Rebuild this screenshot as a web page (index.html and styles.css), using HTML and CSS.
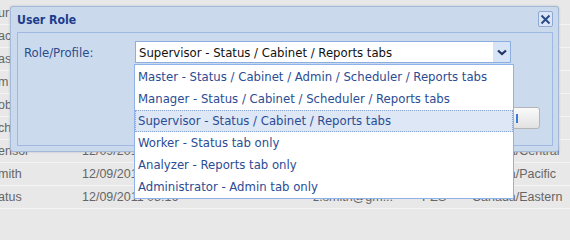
FILE: index.html
```html
<!DOCTYPE html>
<html>
<head>
<meta charset="utf-8">
<link rel="stylesheet" href="styles.css">
</head>
<body>
<div class="grid">
  <div class="row"><span class="c1">ur</span><span></span><span></span><span></span><span></span></div>
  <div class="row"><span class="c1">acl</span><span></span><span></span><span></span><span></span></div>
  <div class="row"><span class="c1">as</span><span></span><span></span><span></span><span></span></div>
  <div class="row"><span class="c1">m</span><span></span><span></span><span></span><span></span></div>
  <div class="row"><span class="c1">ob</span><span></span><span></span><span></span><span></span></div>
  <div class="row"><span class="c1">ch</span><span></span><span></span><span></span><span></span></div>
  <div class="row"><span class="c1">ensor</span><span>12/09/2011 08:16</span><span>z.smith@gmail.com</span><span>PZS</span><span>Canada/Central</span></div>
  <div class="row"><span class="c1">mith</span><span>12/09/2011 08:16</span><span>z.smith@gmail.com</span><span>PZS</span><span>Canada/Pacific</span></div>
  <div class="row"><span class="c1">atus</span><span>12/09/2011 08:16</span><span>z.smith@gm...</span><span>PZS</span><span>Canada/Eastern</span></div>
</div>

<div class="dialog">
  <div class="titlebar">
    <span class="title">User Role</span>
    <span class="close"><svg width="11" height="11" viewBox="0 0 11 11"><path d="M1.5 1.5 L9.5 9.5 M9.5 1.5 L1.5 9.5" stroke="#2c4a86" stroke-width="2" fill="none"/></svg></span>
  </div>
  <div class="panel">
    <div class="field">
      <span class="label">Role/Profile:</span>
      <div class="select">
        <span class="value">Supervisor - Status / Cabinet / Reports tabs</span>
        <span class="arrow"><svg width="10" height="7" viewBox="0 0 10 7"><path d="M1 1.5 L5 5 L9 1.5" stroke="#1f3468" stroke-width="2.2" fill="none"/></svg></span>
      </div>
    </div>
    <div class="buttons">
      <span class="btn"><span class="caret"></span></span>
    </div>
  </div>
</div>

<ul class="list">
  <li>Master - Status / Cabinet / Admin / Scheduler / Reports tabs</li>
  <li>Manager - Status / Cabinet / Scheduler / Reports tabs</li>
  <li class="sel">Supervisor - Status / Cabinet / Reports tabs</li>
  <li>Worker - Status tab only</li>
  <li>Analyzer - Reports tab only</li>
  <li>Administrator - Admin tab only</li>
</ul>
</body>
</html>
```

FILE: styles.css
```css
html, body {
  margin: 0;
  padding: 0;
  background: #e8e8e8;
}
body {
  width: 570px;
  height: 210px;
  overflow: hidden;
  position: relative;
  font-family: "Liberation Sans", Arial, sans-serif;
}
.grid {
  padding-top: 2px;
}
.row {
  display: grid;
  grid-template-columns: 82px 231px 109px 50px 1fr;
  height: 22px;
  line-height: 23px;
  border-bottom: 1px solid #f4f4f4;
  font-size: 12.5px;
  color: #666;
  white-space: nowrap;
  overflow: hidden;
}
.row span { overflow: hidden; }
.row .c1 { margin-left: -2px; }

.dialog {
  position: absolute;
  left: 10px;
  top: 6px;
  width: 547px;
  height: 144px;
  border: 1px solid #a4b8d8;
  border-radius: 3px;
  background: #cbd9ec;
  box-shadow: 0 0 2px rgba(120,140,170,0.5);
  display: flex;
  flex-direction: column;
  font-family: "DejaVu Sans Condensed", "DejaVu Sans", Verdana, sans-serif;
  font-stretch: condensed;
}
.titlebar {
  height: 25px;
  display: flex;
  align-items: center;
  justify-content: space-between;
  padding: 0 5px 0 6px;
}
.title {
  font-weight: bold;
  font-size: 12.2px;
  color: #1c3d8c;
}
.close {
  width: 13px;
  height: 14px;
  border: 1px solid #8ea9d4;
  border-radius: 2px;
  background: #dbe5f4;
  display: flex;
  align-items: center;
  justify-content: center;
  margin-top: -1px;
}
.panel {
  flex: 1;
  margin: 0 5px 5px 6px;
  border: 1px solid #9fb9e4;
  background: #ccdaed;
  padding: 8px 6px 0 6px;
}
.field {
  display: flex;
  align-items: center;
}
.label {
  width: 111px;
  font-size: 13px;
  color: #2b4d8e;
}
.select {
  width: 374px;
  height: 20px;
  border: 1px solid #8caee0;
  background: #fff;
  display: flex;
  align-items: center;
  justify-content: space-between;
}
.value {
  font-size: 13px;
  color: #111;
  padding-left: 3px;
}
.arrow {
  width: 17px;
  height: 20px;
  background: #d7e4f6;
  display: flex;
  align-items: center;
  justify-content: center;
}
.buttons {
  display: flex;
  justify-content: flex-end;
  margin-top: 44px;
  padding-right: 6px;
}
.btn {
  width: 96px;
  height: 20px;
  border: 1px solid #b5b5b5;
  border-radius: 3px;
  background: linear-gradient(#fafafa, #e2e2e2);
  display: flex;
  align-items: center;
  justify-content: flex-end;
  padding-right: 21px;
  box-sizing: content-box;
}
.caret {
  width: 2px;
  height: 9px;
  background: #3a7ad8;
}

.list {
  position: absolute;
  left: 134px;
  top: 64px;
  width: 378px;
  margin: 0;
  padding: 1px 0 0 0;
  list-style: none;
  background: #fff;
  border: 1px solid #8fb2ea;
  font-family: "DejaVu Sans Condensed", "DejaVu Sans", Verdana, sans-serif;
  font-stretch: condensed;
  font-size: 13px;
  color: #2b4c94;
}
.list li {
  height: 22px;
  line-height: 22px;
  padding-left: 3px;
  white-space: nowrap;
  box-sizing: border-box;
}
.list li.sel {
  background: #dde7f5;
  border: 1px dotted #8ca6cf;
  line-height: 20px;
  padding-left: 2px;
}
```
